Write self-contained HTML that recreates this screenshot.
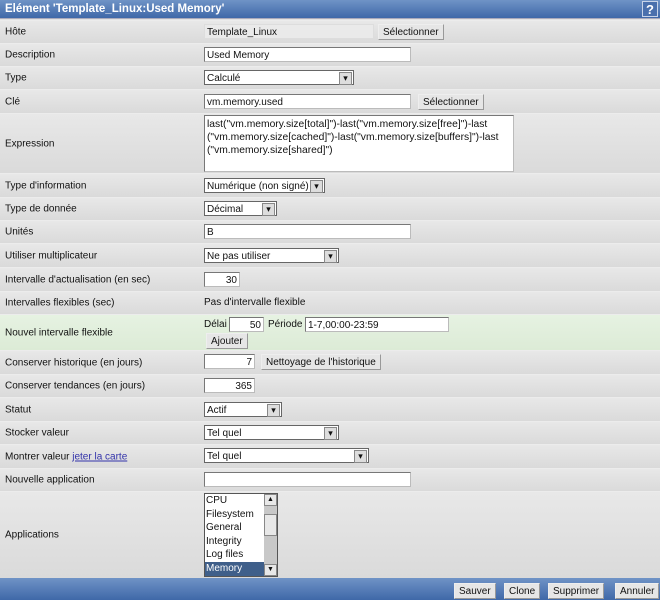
<!DOCTYPE html>
<html><head><meta charset="utf-8"><style>
*{box-sizing:border-box;margin:0;padding:0}
body{width:660px;height:600px;overflow:hidden;background:#e2e2e2;font-family:"Liberation Sans",sans-serif;font-size:10px;color:#111;position:relative}
.title{position:absolute;left:0;top:0;width:660px;height:19px;background:linear-gradient(#6f93c6,#3f68a8);color:#fff;font-weight:bold;font-size:11.5px;padding:3px 0 0 5px;border-bottom:1px solid #aab}
.help{position:absolute;right:2px;top:1px;width:16px;height:16px;background:#4a70ad;border:1px solid #c8d4e8;color:#fff;font-weight:bold;font-size:13px;text-align:center;line-height:15px}
.row{position:absolute;left:0;width:660px;background:linear-gradient(#e8e8e8,#dadada);border-top:1px solid #ececec}
.row .l{position:absolute;left:5px;top:50%;transform:translateY(-50%);white-space:nowrap}
.g{background:linear-gradient(#e6f2e2,#dcebd6)}
.inp{position:absolute;height:15px;background:#fff;border:1px solid #777;border-right-color:#bbb;border-bottom-color:#bbb;padding:2px 2px 0;white-space:nowrap;overflow:hidden;line-height:11px}
.r{text-align:right}
.btn{position:absolute;height:16px;background:#e6e6e6;border:1px solid #999;border-top-color:#eee;border-left-color:#eee;padding:2px 4px 0;line-height:11px;white-space:nowrap}
.sel{position:absolute;height:15px;background:#fff;border:1px solid #666;padding:2px 2px 0;line-height:11px;white-space:nowrap}
.sel:after{content:"▾";position:absolute;right:1px;top:1px;width:11px;height:11px;background:#ddd;border:1px solid #888;font-size:9px;line-height:10px;text-align:center}
.foot{position:absolute;left:0;top:578px;width:660px;height:22px;background:linear-gradient(#6f93c6,#3f68a8)}
a{color:#3333aa;text-decoration:underline}
</style></head><body>
<div class="title">Elément 'Template_Linux:Used Memory'<div class="help">?</div></div>

<div class="row" style="top:20px;height:23px"><span class="l">Hôte</span></div>
<div class="inp" style="left:204px;top:24px;width:170px;background:#eaeaea;border-color:#ddd">Template_Linux</div>
<div class="btn" style="left:378px;top:24px">Sélectionner</div>

<div class="row" style="top:43px;height:23px"><span class="l">Description</span></div>
<div class="inp" style="left:204px;top:47px;width:207px">Used Memory</div>

<div class="row" style="top:66px;height:23px"><span class="l">Type</span></div>
<div class="sel" style="left:204px;top:70px;width:150px">Calculé</div>

<div class="row" style="top:89px;height:24px"><span class="l">Clé</span></div>
<div class="inp" style="left:204px;top:94px;width:207px">vm.memory.used</div>
<div class="btn" style="left:418px;top:94px">Sélectionner</div>

<div class="row" style="top:113px;height:60px"><span class="l">Expression</span></div>
<div class="inp" style="left:204px;top:115px;width:310px;height:57px;white-space:normal;line-height:13px;font-size:10.3px">last("vm.memory.size[total]")-last("vm.memory.size[free]")-last ("vm.memory.size[cached]")-last("vm.memory.size[buffers]")-last ("vm.memory.size[shared]")</div>

<div class="row" style="top:173px;height:24px"><span class="l">Type d'information</span></div>
<div class="sel" style="left:204px;top:178px;width:121px">Numérique (non signé)</div>

<div class="row" style="top:197px;height:23px"><span class="l">Type de donnée</span></div>
<div class="sel" style="left:204px;top:201px;width:73px">Décimal</div>

<div class="row" style="top:220px;height:23px"><span class="l">Unités</span></div>
<div class="inp" style="left:204px;top:224px;width:207px">B</div>

<div class="row" style="top:243px;height:24px"><span class="l">Utiliser multiplicateur</span></div>
<div class="sel" style="left:204px;top:248px;width:135px">Ne pas utiliser</div>

<div class="row" style="top:267px;height:24px"><span class="l">Intervalle d'actualisation (en sec)</span></div>
<div class="inp r" style="left:204px;top:272px;width:36px">30</div>

<div class="row" style="top:291px;height:23px"><span class="l">Intervalles flexibles (sec)</span></div>
<div style="position:absolute;left:204px;top:297px">Pas d'intervalle flexible</div>

<div class="row g" style="top:314px;height:36px"><span class="l">Nouvel intervalle flexible</span></div>
<div style="position:absolute;left:204px;top:319px">Délai</div>
<div class="inp r" style="left:229px;top:317px;width:35px">50</div>
<div style="position:absolute;left:268px;top:319px">Période</div>
<div class="inp" style="left:305px;top:317px;width:144px">1-7,00:00-23:59</div>
<div class="btn" style="left:206px;top:333px">Ajouter</div>

<div class="row" style="top:350px;height:24px"><span class="l">Conserver historique (en jours)</span></div>
<div class="inp r" style="left:204px;top:354px;width:51px">7</div>
<div class="btn" style="left:261px;top:354px">Nettoyage de l'historique</div>

<div class="row" style="top:374px;height:23px"><span class="l">Conserver tendances (en jours)</span></div>
<div class="inp r" style="left:204px;top:378px;width:51px">365</div>

<div class="row" style="top:397px;height:24px"><span class="l">Statut</span></div>
<div class="sel" style="left:204px;top:402px;width:78px">Actif</div>

<div class="row" style="top:421px;height:23px"><span class="l">Stocker valeur</span></div>
<div class="sel" style="left:204px;top:425px;width:135px">Tel quel</div>

<div class="row" style="top:444px;height:24px"><span class="l">Montrer valeur <a>jeter la carte</a></span></div>
<div class="sel" style="left:204px;top:448px;width:165px">Tel quel</div>

<div class="row" style="top:468px;height:23px"><span class="l">Nouvelle application</span></div>
<div class="inp" style="left:204px;top:472px;width:207px"></div>

<div class="row" style="top:491px;height:87px"><span class="l">Applications</span></div>
<div style="position:absolute;left:204px;top:493px;width:74px;height:84px;background:#fff;border:1px solid #555;line-height:13.6px;padding-left:1px">
CPU<br>Filesystem<br>General<br>Integrity<br>Log files
<div style="background:#3f5f8a;color:#fff;width:59px;margin-left:-1px;padding-left:1px">Memory</div>
<div style="position:absolute;right:0;top:0;width:13px;height:82px;background:#c8c8c8">
<div style="height:12px;background:#e8e8e8;border:1px solid #888;font-size:7px;text-align:center;line-height:10px">▲</div>
<div style="margin-top:8px;height:22px;background:#e8e8e8;border:1px solid #888"></div>
<div style="position:absolute;bottom:0;width:13px;height:12px;background:#e8e8e8;border:1px solid #888;font-size:7px;text-align:center;line-height:10px">▼</div>
</div></div>

<div class="foot"></div>
<div class="btn" style="left:454px;top:583px">Sauver</div>
<div class="btn" style="left:504px;top:583px">Clone</div>
<div class="btn" style="left:548px;top:583px">Supprimer</div>
<div class="btn" style="left:615px;top:583px">Annuler</div>
</body></html>
